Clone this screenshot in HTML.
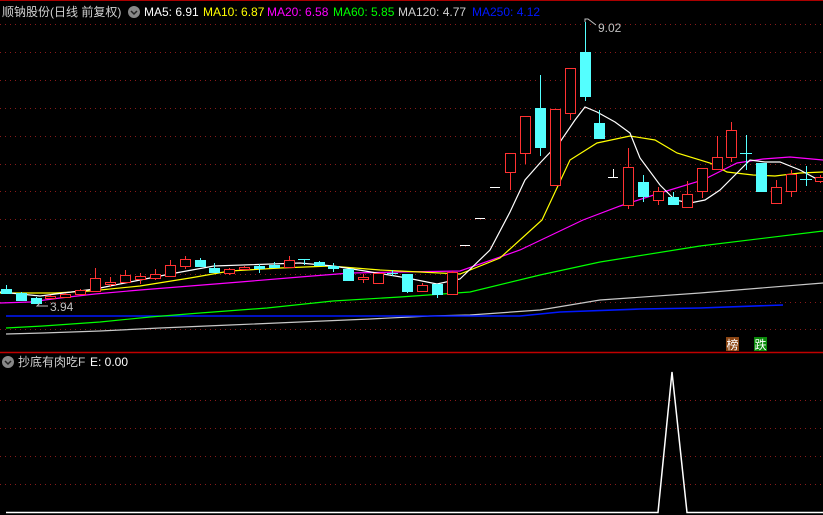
<!DOCTYPE html>
<html><head><meta charset="utf-8"><style>
html,body{margin:0;padding:0;background:#000;width:823px;height:515px;overflow:hidden}
svg{display:block}
text{font-family:"Liberation Sans","Noto Sans CJK SC",sans-serif;font-size:12px}
</style></head><body>
<svg width="823" height="515" viewBox="0 0 823 515" xmlns="http://www.w3.org/2000/svg">
<rect width="823" height="515" fill="#000"/>
<line x1="0" y1="0.5" x2="823" y2="0.5" stroke="#a00" />
<g stroke="#8a1a1a" stroke-dasharray="1 4" stroke-width="1">
<line x1="0" y1="24.5" x2="823" y2="24.5"/><line x1="0" y1="52.5" x2="823" y2="52.5"/>
<line x1="0" y1="80.5" x2="823" y2="80.5"/><line x1="0" y1="108.5" x2="823" y2="108.5"/>
<line x1="0" y1="136.5" x2="823" y2="136.5"/><line x1="0" y1="164.5" x2="823" y2="164.5"/>
<line x1="0" y1="191.5" x2="823" y2="191.5"/><line x1="0" y1="219.5" x2="823" y2="219.5"/>
<line x1="0" y1="246.5" x2="823" y2="246.5"/><line x1="0" y1="274.5" x2="823" y2="274.5"/>
<line x1="0" y1="302.5" x2="823" y2="302.5"/><line x1="0" y1="329.5" x2="823" y2="329.5"/>
<line x1="0" y1="400.5" x2="823" y2="400.5"/><line x1="0" y1="428.5" x2="823" y2="428.5"/>
<line x1="0" y1="456.5" x2="823" y2="456.5"/><line x1="0" y1="484.5" x2="823" y2="484.5"/>
</g>
<line x1="0" y1="352.5" x2="823" y2="352.5" stroke="#c00000" stroke-width="1.5"/>

<!-- MA lines -->
<g fill="none" stroke-width="1.2">
<polyline stroke="#c8c8c8" points="6,334 43,333 100,331 160,328 230,325 300,322 370,319 430,316 470,315 540,310 600,300 700,293 823,283"/>
<polyline stroke="#0018ff" stroke-width="1.6" points="6,316 520,316 560,312 640,309 700,308 783,305"/>
<polyline stroke="#00ff00" points="6,328 43,326 100,322 150,317 200,313 267,308 333,301 400,297 470,292 540,275 600,262 700,246 823,231"/>
<polyline stroke="#ff00ff" points="0,303 30,302 60,298 95,294 140,290 190,286 240,282 300,277 350,273 400,272 460,271 520,250 583,220 620,206 660,193 703,180 737,163 763,159 790,157 823,160"/>
<polyline stroke="#ffff00" points="0,293 55,293 90,291 140,286 190,278 230,271 280,268 330,266 380,270 420,272 460,274 500,258 542,220 570,160 597,143 630,136 655,140 677,153 710,163 727,172 753,175 775,176 800,173 823,172"/>
<polyline stroke="#ffffff" points="0,292 40,296 95,289 170,274 214,266 300,263 333,266 365,271 407,278 437,284 460,279 490,250 510,212 525,180 540,163 560,142 575,120 585,107 597,112 615,122 630,133 640,158 660,185 675,200 690,203 705,200 720,190 735,175 750,160 765,162 780,162 800,170 815,178 823,180"/>
</g>

<!-- candles -->
<g stroke-width="1">
<g stroke="#54ffff" fill="#54ffff">
<line x1="6.5" y1="285" x2="6.5" y2="294"/><rect x="1.5" y="289.5" width="10" height="4"/>
<line x1="21.5" y1="292" x2="21.5" y2="301"/><rect x="16.5" y="293.5" width="10" height="7"/>
<line x1="36.5" y1="297" x2="36.5" y2="304"/><rect x="31.5" y="298.5" width="10" height="5"/>
<line x1="200.5" y1="258" x2="200.5" y2="266"/><rect x="195.5" y="260.5" width="10" height="6"/>
<line x1="214.5" y1="263" x2="214.5" y2="272"/><rect x="209.5" y="268.5" width="10" height="4"/>
<line x1="259.5" y1="264" x2="259.5" y2="273"/><rect x="254.5" y="266.5" width="10" height="2"/>
<line x1="274.5" y1="262" x2="274.5" y2="267"/><rect x="269.5" y="265.5" width="10" height="2"/>
<line x1="304.5" y1="259" x2="304.5" y2="265"/><line x1="298" y1="259.5" x2="310" y2="259.5"/>
<line x1="319.5" y1="261" x2="319.5" y2="266"/><rect x="314.5" y="262.5" width="10" height="3"/>
<line x1="333.5" y1="263" x2="333.5" y2="272"/><rect x="328.5" y="266.5" width="10" height="2"/>
<rect x="343.5" y="269.5" width="10" height="11"/>
<line x1="392.5" y1="270" x2="392.5" y2="276"/><line x1="387" y1="273.5" x2="398" y2="273.5"/>
<line x1="407.5" y1="274" x2="407.5" y2="293"/><rect x="402.5" y="274.5" width="10" height="17"/>
<line x1="437.5" y1="284" x2="437.5" y2="298"/><rect x="432.5" y="284.5" width="10" height="10"/>
<line x1="540.5" y1="75" x2="540.5" y2="156"/><rect x="535.5" y="108.5" width="10" height="39"/>
<line x1="585.5" y1="22" x2="585.5" y2="101"/><rect x="580.5" y="52.5" width="10" height="44"/>
<line x1="599.5" y1="110" x2="599.5" y2="138"/><rect x="594.5" y="123.5" width="10" height="15"/>
<line x1="643.5" y1="175" x2="643.5" y2="202"/><rect x="638.5" y="182.5" width="10" height="14"/>
<line x1="673.5" y1="192" x2="673.5" y2="204"/><rect x="668.5" y="197.5" width="10" height="7"/>
<line x1="746.5" y1="135" x2="746.5" y2="170"/><line x1="740" y1="153.5" x2="752" y2="153.5"/>
<rect x="756.5" y="163.5" width="10" height="28"/>
<line x1="806.5" y1="166" x2="806.5" y2="186"/><line x1="800" y1="179.5" x2="812" y2="179.5"/>
</g>
<g stroke="#ff3232" fill="#000">
<line x1="50.5" y1="295" x2="50.5" y2="299"/><rect x="45.5" y="296.5" width="10" height="2"/>
<line x1="65.5" y1="293" x2="65.5" y2="298"/><rect x="60.5" y="294.5" width="10" height="3"/>
<line x1="80.5" y1="289" x2="80.5" y2="295"/><rect x="75.5" y="290.5" width="10" height="4"/>
<line x1="95.5" y1="268" x2="95.5" y2="292"/><rect x="90.5" y="278.5" width="10" height="13"/>
<line x1="110.5" y1="277" x2="110.5" y2="287"/><rect x="105.5" y="282.5" width="10" height="2"/>
<line x1="125.5" y1="270" x2="125.5" y2="283"/><rect x="120.5" y="275.5" width="10" height="7"/>
<line x1="140.5" y1="273" x2="140.5" y2="284"/><rect x="135.5" y="276.5" width="10" height="3"/>
<line x1="155.5" y1="269" x2="155.5" y2="280"/><rect x="150.5" y="274.5" width="10" height="4"/>
<line x1="170.5" y1="260" x2="170.5" y2="277"/><rect x="165.5" y="265.5" width="10" height="11"/>
<line x1="185.5" y1="256" x2="185.5" y2="269"/><rect x="180.5" y="259.5" width="10" height="7"/>
<line x1="229.5" y1="268" x2="229.5" y2="275"/><rect x="224.5" y="269.5" width="10" height="4"/>
<line x1="244.5" y1="266" x2="244.5" y2="270"/><rect x="239.5" y="267.5" width="10" height="2"/>
<line x1="289.5" y1="256" x2="289.5" y2="267"/><rect x="284.5" y="260.5" width="10" height="7"/>
<line x1="363.5" y1="274" x2="363.5" y2="283"/><rect x="358.5" y="277.5" width="10" height="2"/>
<rect x="373.5" y="273.5" width="10" height="10"/>
<line x1="422.5" y1="283" x2="422.5" y2="291"/><rect x="417.5" y="285.5" width="10" height="6"/>
<line x1="452.5" y1="271" x2="452.5" y2="295"/><rect x="447.5" y="272.5" width="10" height="22"/>
<line x1="510.5" y1="153" x2="510.5" y2="190"/><rect x="505.5" y="153.5" width="10" height="19"/>
<line x1="525.5" y1="116" x2="525.5" y2="164"/><rect x="520.5" y="116.5" width="10" height="37"/>
<rect x="550.5" y="109.5" width="10" height="76"/>
<line x1="570.5" y1="68" x2="570.5" y2="120"/><rect x="565.5" y="68.5" width="10" height="45"/>
<line x1="628.5" y1="148" x2="628.5" y2="209"/><rect x="623.5" y="167.5" width="10" height="38"/>
<line x1="658.5" y1="187" x2="658.5" y2="205"/><rect x="653.5" y="191.5" width="10" height="9"/>
<line x1="687.5" y1="181" x2="687.5" y2="207"/><rect x="682.5" y="194.5" width="10" height="13"/>
<line x1="702.5" y1="168" x2="702.5" y2="198"/><rect x="697.5" y="168.5" width="10" height="23"/>
<line x1="717.5" y1="136" x2="717.5" y2="169"/><rect x="712.5" y="157.5" width="10" height="12"/>
<line x1="731.5" y1="122" x2="731.5" y2="162"/><rect x="726.5" y="130.5" width="10" height="27"/>
<line x1="776.5" y1="180" x2="776.5" y2="203"/><rect x="771.5" y="187.5" width="10" height="16"/>
<line x1="791.5" y1="170" x2="791.5" y2="197"/><rect x="786.5" y="174.5" width="10" height="17"/>
<line x1="820.5" y1="175" x2="820.5" y2="183"/><rect x="815.5" y="177.5" width="10" height="4"/>
</g>
<g stroke="#fff">
<line x1="460" y1="245.5" x2="470" y2="245.5"/>
<line x1="475" y1="218.5" x2="485" y2="218.5"/>
<line x1="490" y1="187.5" x2="500" y2="187.5"/>
<line x1="608" y1="177.5" x2="618" y2="177.5"/><line x1="613.5" y1="169" x2="613.5" y2="177"/>
</g>
</g>

<!-- labels -->
<g fill="#c0c0c0" stroke="#c0c0c0">
<polyline fill="none" points="48,306 37,306 40,303" />
<polyline fill="none" points="585,22 585,19 588,19 596,25" />
</g>
<text x="50" y="311" fill="#c0c0c0">3.94</text>
<text x="598" y="32" fill="#c0c0c0">9.02</text>

<rect x="726" y="337" width="13" height="14" fill="#8b4513"/>
<text x="726.5" y="349" fill="#fff" font-size="12">榜</text>
<rect x="754" y="337" width="13" height="14" fill="#0a8a0a"/>
<text x="754.5" y="349" fill="#fff" font-size="12">跌</text>

<!-- header -->
<text x="2" y="16" fill="#d0d0d0">顺钠股份(日线 前复权)</text>
<circle cx="134" cy="12" r="6" fill="#888"/>
<polyline points="131,11 134,14 137,11" fill="none" stroke="#222" stroke-width="1.5"/>
<text x="144" y="16" fill="#ffffff">MA5: 6.91</text>
<text x="203" y="16" fill="#ffff00">MA10: 6.87</text>
<text x="267" y="16" fill="#ff00ff">MA20: 6.58</text>
<text x="333" y="16" fill="#00ff00">MA60: 5.85</text>
<text x="398" y="16" fill="#d0d0d0">MA120: 4.77</text>
<text x="472" y="16" fill="#0018ff">MA250: 4.12</text>

<circle cx="8" cy="362" r="6" fill="#888"/>
<polyline points="5,361 8,364 11,361" fill="none" stroke="#222" stroke-width="1.5"/>
<text x="18" y="366" fill="#d0d0d0">抄底有肉吃F</text>
<text x="90" y="366" fill="#ffffff">E: 0.00</text>

<!-- indicator -->
<polyline fill="none" stroke="#fff" stroke-width="1.5" points="6,512.5 658,512.5 672,372 687,512.5 823,512.5"/>
</svg>
</body></html>
